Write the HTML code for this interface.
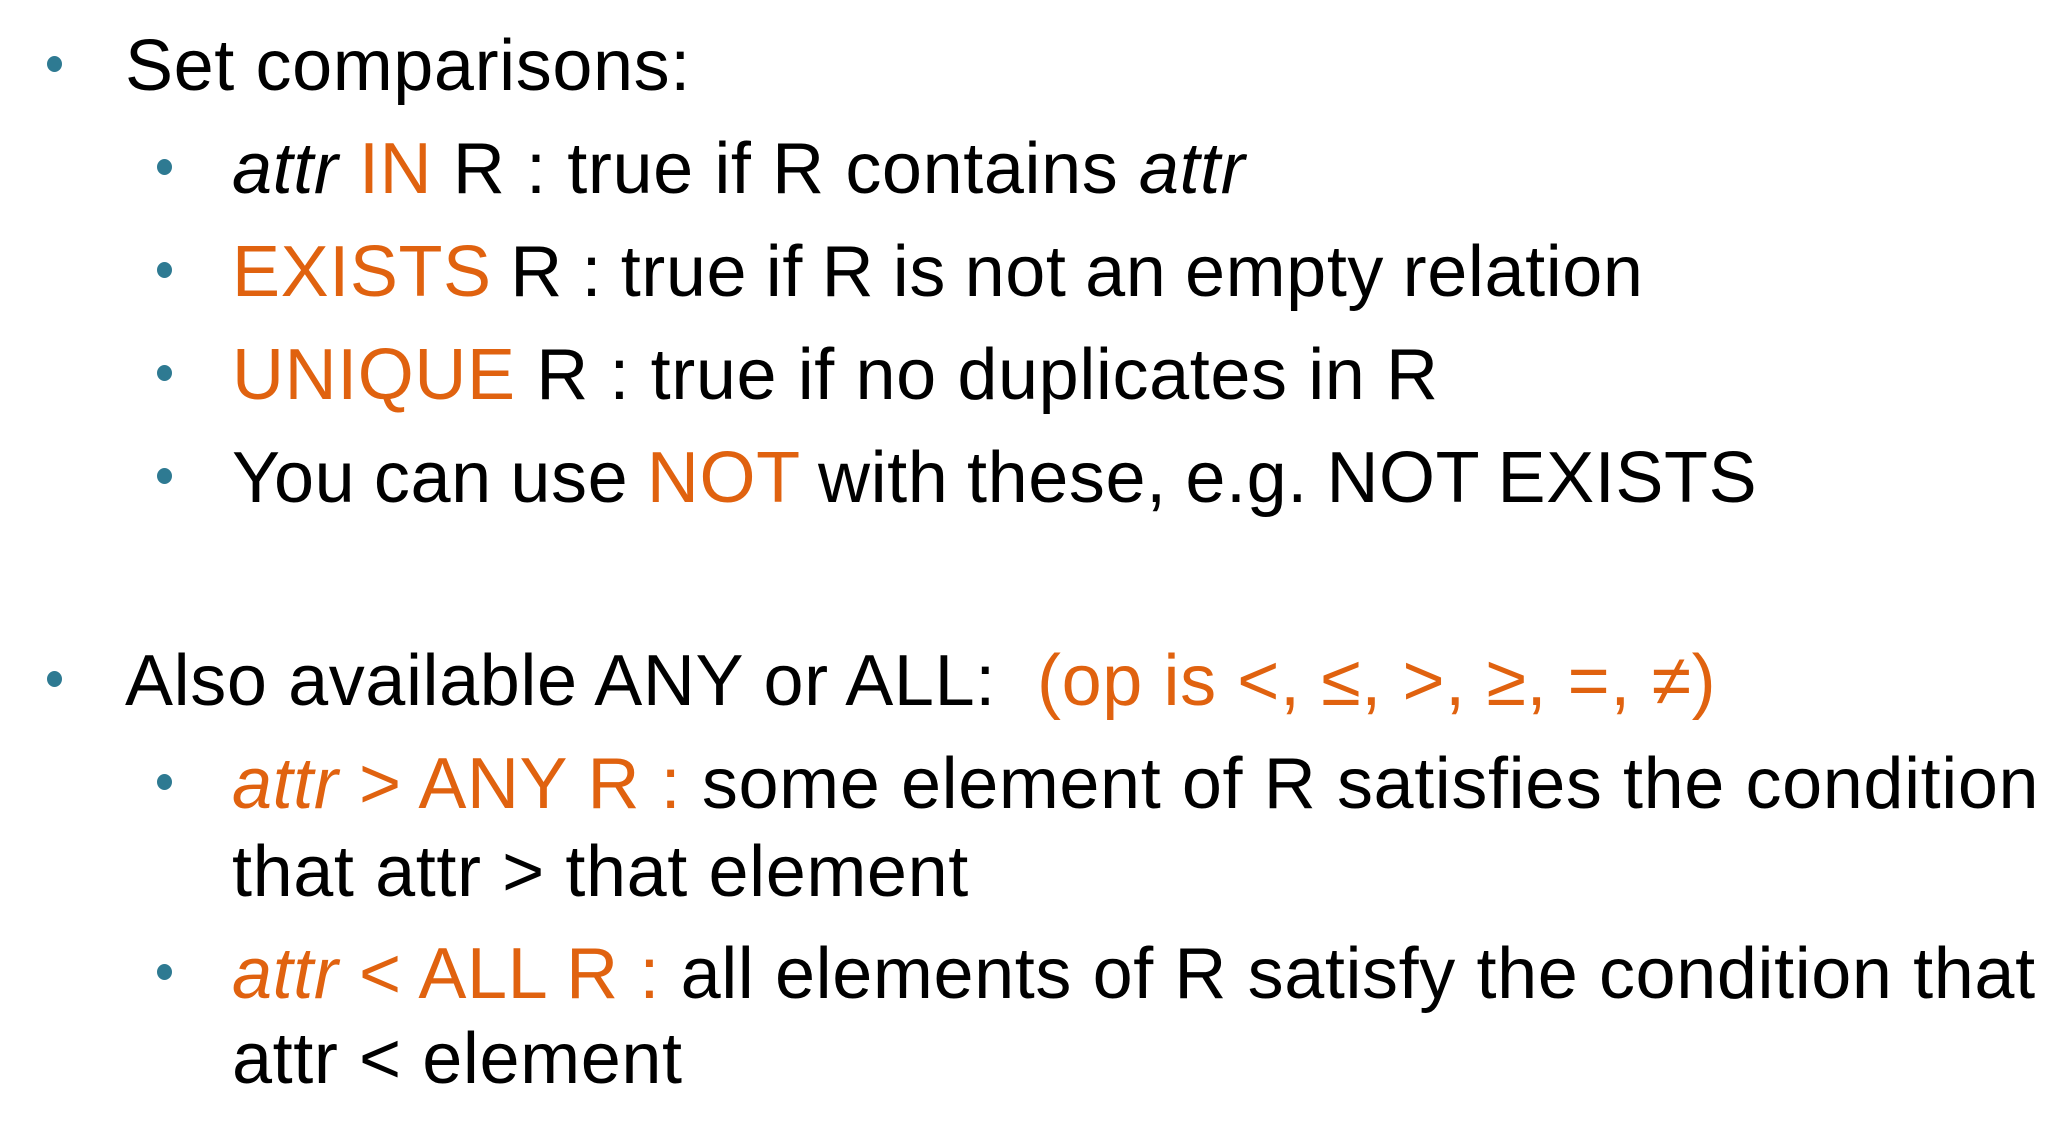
<!DOCTYPE html>
<html><head><meta charset="utf-8"><style>
body{margin:0;width:2070px;height:1144px;background:#fff;overflow:hidden;position:relative;font-family:"Liberation Sans",Arial,sans-serif;}
.l{position:absolute;white-space:nowrap;font-size:72px;line-height:72px;color:#000;letter-spacing:0.6px}
.o{color:#E0620F}
.b{position:absolute;width:15px;height:16px;border-radius:50%;background:#2E7A92}
</style></head><body>
<div class="b" style="left:47px;top:56px"></div>
<div class="l" style="left:125px;top:30px">Set comparisons:</div>

<div class="b" style="left:157px;top:159px"></div>
<div class="l" style="left:232px;top:133px"><i>attr</i> <span class="o">IN</span> R : true if R contains <i>attr</i></div>

<div class="b" style="left:157px;top:262px"></div>
<div class="l" style="left:232px;top:236px;word-spacing:-2px"><span class="o">EXISTS</span> R : true if R is not an empty relation</div>

<div class="b" style="left:157px;top:365px"></div>
<div class="l" style="left:232px;top:339px"><span class="o">UNIQUE</span> R : true if no duplicates in R</div>

<div class="b" style="left:157px;top:468px"></div>
<div class="l" style="left:232px;top:442px;word-spacing:-2px">You can use <span class="o">NOT</span> with these, e.g. NOT EXISTS</div>

<div class="b" style="left:47px;top:671px"></div>
<div class="l" style="left:125px;top:645px">Also available ANY or ALL:&nbsp; <span class="o">(op is &lt;, ≤, &gt;, ≥, =, ≠)</span></div>

<div class="b" style="left:157px;top:774px"></div>
<div class="l" style="left:232px;top:748px"><span class="o"><i>attr</i> &gt; ANY R :</span> some element of R satisfies the condition</div>
<div class="l" style="left:232px;top:836px">that attr &gt; that element</div>

<div class="b" style="left:157px;top:964px"></div>
<div class="l" style="left:232px;top:938px"><span class="o"><i>attr</i> &lt; ALL R :</span> all elements of R satisfy the condition that</div>
<div class="l" style="left:232px;top:1023px">attr &lt; element</div>
</body></html>
